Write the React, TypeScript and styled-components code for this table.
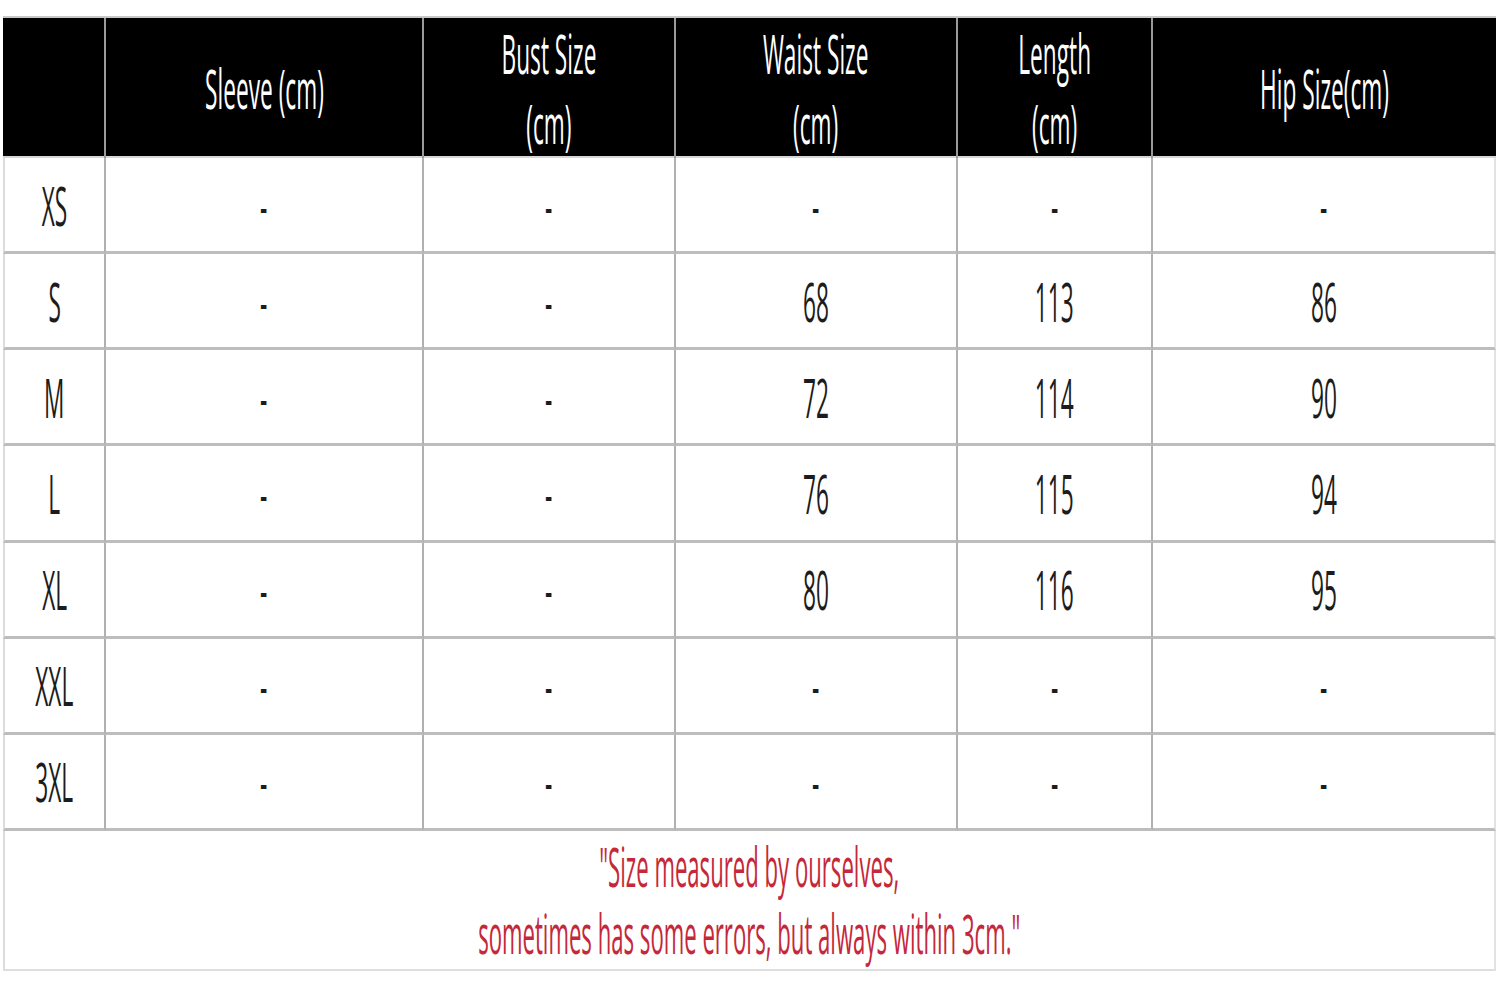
import styled, { createGlobalStyle } from 'styled-components';

const GlobalStyle = createGlobalStyle`
  html, body {
    margin: 0;
    padding: 0;
    background: #ffffff;
  }
  body {
    font-family: "Open Sans", "Liberation Sans", sans-serif;
  }
`;

const COLUMNS = '103px 318px 252px 282px 195px 343px';

const headers: string[][] = [
  [],
  ['Sleeve (cm)'],
  ['Bust Size', '(cm)'],
  ['Waist Size', '(cm)'],
  ['Length', '(cm)'],
  ['Hip Size(cm)'],
];

const rows: string[][] = [
  ['XS', '-', '-', '-', '-', '-'],
  ['S', '-', '-', '68', '113', '86'],
  ['M', '-', '-', '72', '114', '90'],
  ['L', '-', '-', '76', '115', '94'],
  ['XL', '-', '-', '80', '116', '95'],
  ['XXL', '-', '-', '-', '-', '-'],
  ['3XL', '-', '-', '-', '-', '-'],
];

const Page = styled.div`
  padding: 16px 4px 0 3px;
  width: 1493px;
`;

const Chart = styled.div`
  display: flex;
  flex-direction: column;
  border-top: 2px solid #c8c8c8;
`;

const HeaderRow = styled.div`
  display: grid;
  grid-template-columns: ${COLUMNS};
  height: 138px;
  background: #000000;
  border-bottom: 2px solid #d6d6d6;
`;

const HeaderCell = styled.div<{ $last?: boolean }>`
  display: flex;
  align-items: center;
  justify-content: center;
  border-right: ${(p) => (p.$last ? 'none' : '2px solid #9a9a9a')};
  color: #ffffff;
  padding-bottom: 6px;
`;

const Body = styled.div`
  display: grid;
  grid-template-columns: ${COLUMNS};
  grid-template-rows: repeat(7, 1fr);
  height: 673px;
`;

const Cell = styled.div<{ $last?: boolean }>`
  display: flex;
  align-items: center;
  justify-content: center;
  border-right: ${(p) => (p.$last ? '2px solid #e2e2e2' : '2px solid #b0b0b0')};
  border-bottom: 3px solid #bdbdbd;
  color: #1c1c1c;
`;

const FirstCell = styled(Cell)`
  border-left: 2px solid #dcdcdc;
`;

const Squeeze = styled.span<{ $lh?: number; $sx?: number }>`
  display: inline-block;
  font-size: 54px;
  line-height: ${(p) => p.$lh ?? 54}px;
  text-align: center;
  white-space: nowrap;
  transform: scaleX(${(p) => p.$sx ?? 0.42});
  transform-origin: center;
`;

const Note = styled.div`
  height: 138px;
  display: flex;
  align-items: center;
  justify-content: center;
  border-left: 2px solid #dcdcdc;
  border-right: 2px solid #e2e2e2;
  border-bottom: 2px solid #dedede;
  color: #c4283a;
`;

export default function App() {
  return (
    <>
      <GlobalStyle />
      <Page>
        <Chart>
          <HeaderRow>
            {headers.map((lines, i) => (
              <HeaderCell key={i} $last={i === headers.length - 1}>
                {lines.length > 0 && (
                  <Squeeze $lh={70}>
                    {lines.map((l, j) => (
                      <div key={j}>{l}</div>
                    ))}
                  </Squeeze>
                )}
              </HeaderCell>
            ))}
          </HeaderRow>
          <Body>
            {rows.map((row, r) =>
              row.map((v, c) =>
                c === 0 ? (
                  <FirstCell key={`${r}-${c}`}>
                    <Squeeze>{v}</Squeeze>
                  </FirstCell>
                ) : (
                  <Cell key={`${r}-${c}`} $last={c === row.length - 1}>
                    <Squeeze>{v}</Squeeze>
                  </Cell>
                )
              )
            )}
          </Body>
          <Note>
            <Squeeze $lh={67} $sx={0.41}>
              <div>"Size measured by ourselves,</div>
              <div>sometimes has some errors, but always within 3cm."</div>
            </Squeeze>
          </Note>
        </Chart>
      </Page>
    </>
  );
}
